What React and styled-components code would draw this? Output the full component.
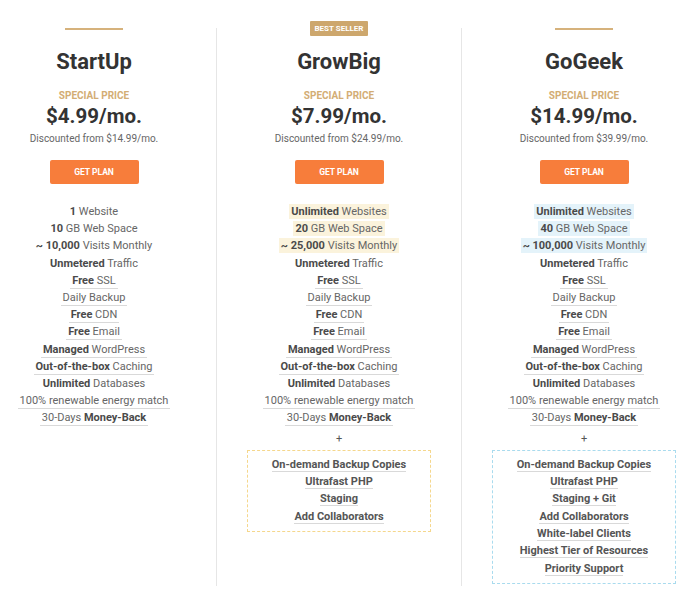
import React from 'react';
import styled, { createGlobalStyle } from 'styled-components';

const GlobalStyle = createGlobalStyle`
  html, body {
    margin: 0;
    padding: 0;
    background: #fff;
    overflow: hidden;
  }
  body {
    font-family: Roboto, 'Liberation Sans', Arial, sans-serif;
    color: #666;
  }
`;

const Grid = styled.div`
  display: grid;
  grid-template-columns: 245px 245px 245px;
  margin: 28px 0 0 -29px;
  width: 735px;
`;

const Column = styled.div`
  display: flex;
  flex-direction: column;
  align-items: center;
  border-left: ${(p) => (p.$divider ? '1px solid #e6e6e6' : '1px solid transparent')};
  padding-bottom: 2px;
`;

const Cap = styled.div`
  width: 58px;
  height: 2px;
  background: #d6b27c;
`;

const Badge = styled.div`
  margin: -7px 0 -6px;
  height: 15px;
  padding: 0 5px;
  background: #cda76d;
  color: #fff;
  font-size: 8px;
  font-weight: 700;
  line-height: 15px;
  border-radius: 1px;
  text-transform: uppercase;
`;

const Title = styled.h2`
  margin: 18px 0 0;
  font-size: 22px;
  line-height: 28px;
  font-weight: 700;
  color: #333;
`;

const Special = styled.div`
  margin-top: 14px;
  font-size: 10px;
  line-height: 12px;
  font-weight: 700;
  color: #d3ad74;
  text-transform: uppercase;
`;

const Price = styled.div`
  margin-top: 2px;
  font-size: 20.5px;
  line-height: 24px;
  font-weight: 700;
  color: #333;
`;

const Discount = styled.div`
  margin-top: 5px;
  font-size: 10px;
  line-height: 12px;
  color: #666;
`;

const Button = styled.button`
  margin-top: 15px;
  width: 89px;
  height: 24px;
  border: none;
  border-radius: 2px;
  background: #f77d3b;
  color: #fff;
  font-family: inherit;
  font-size: 8.5px;
  font-weight: 700;
  text-transform: uppercase;
  cursor: pointer;
`;

const Features = styled.ul`
  list-style: none;
  margin: 19px 0 0;
  padding: 0;
  text-align: center;
`;

const Row = styled.li`
  font-size: 11px;
  line-height: 17.2px;
  color: #666;
  white-space: nowrap;
  & b {
    font-weight: 700;
    color: #4a4a4a;
  }
`;

const Mark = styled.span`
  padding: 1px 2px;
  background: ${(p) => p.$bg || 'transparent'};
  border-bottom: ${(p) => (p.$line ? '1px solid #d9d9d9' : 'none')};
`;

const Plus = styled.div`
  margin-top: 3px;
  font-size: 11px;
  line-height: 17px;
  color: #555;
`;

const Extras = styled.ul`
  list-style: none;
  margin: 3px 0 0;
  padding: 5px 0 6px;
  width: 184px;
  box-sizing: border-box;
  border: 1px dashed ${(p) => p.$color};
  text-align: center;
`;

const Extra = styled.li`
  font-size: 11px;
  line-height: 17.35px;
  font-weight: 700;
  color: #555;
  & span {
    border-bottom: 1px solid #d9d9d9;
  }
`;

const plans = [
  {
    name: 'StartUp',
    price: '$4.99/mo.',
    was: '$14.99/mo.',
    hi: null,
    top: ['1', ' Website', '10', ' GB Web Space', '~ 10,000', ' Visits Monthly'],
  },
  {
    name: 'GrowBig',
    badge: 'Best Seller',
    price: '$7.99/mo.',
    was: '$24.99/mo.',
    hi: '#fbf3dc',
    box: '#f5d78c',
    top: ['Unlimited', ' Websites', '20', ' GB Web Space', '~ 25,000', ' Visits Monthly'],
    extras: ['On-demand Backup Copies', 'Ultrafast PHP', 'Staging', 'Add Collaborators'],
  },
  {
    name: 'GoGeek',
    price: '$14.99/mo.',
    was: '$39.99/mo.',
    hi: '#e4f3fa',
    box: '#a9dbee',
    top: ['Unlimited', ' Websites', '40', ' GB Web Space', '~ 100,000', ' Visits Monthly'],
    extras: [
      'On-demand Backup Copies',
      'Ultrafast PHP',
      'Staging + Git',
      'Add Collaborators',
      'White-label Clients',
      'Highest Tier of Resources',
      'Priority Support',
    ],
  },
];

// [bold part, plain part, underlined, bold comes last]
const common = [
  ['Unmetered', ' Traffic', false],
  ['Free', ' SSL', true],
  ['', 'Daily Backup', true],
  ['Free', ' CDN', true],
  ['Free', ' Email', true],
  ['Managed', ' WordPress', true],
  ['Out-of-the-box', ' Caching', true],
  ['Unlimited', ' Databases', false],
  ['', '100% renewable energy match', true],
  ['Money-Back', '30-Days ', true, true],
];

const Plan = ({ plan, index }) => {
  const t = plan.top;
  return (
    <Column $divider={index > 0}>
      {plan.badge ? <Badge>{plan.badge}</Badge> : <Cap />}
      <Title>{plan.name}</Title>
      <Special>Special price</Special>
      <Price>{plan.price}</Price>
      <Discount>Discounted from {plan.was}</Discount>
      <Button>Get plan</Button>
      <Features>
        {[0, 2, 4].map((i) => (
          <Row key={i}>
            <Mark $bg={plan.hi}>
              <b>{t[i]}</b>
              {t[i + 1]}
            </Mark>
          </Row>
        ))}
        {common.map(([bold, plain, line, after]) => (
          <Row key={bold + plain}>
            <Mark $line={line}>
              {after ? plain : null}
              {bold && <b>{bold}</b>}
              {after ? null : plain}
            </Mark>
          </Row>
        ))}
      </Features>
      {plan.extras && (
        <>
          <Plus>+</Plus>
          <Extras $color={plan.box}>
            {plan.extras.map((e) => (
              <Extra key={e}>
                <span>{e}</span>
              </Extra>
            ))}
          </Extras>
        </>
      )}
    </Column>
  );
};

const App = () => {
  return (
    <>
      <GlobalStyle />
      <Grid>
        {plans.map((p, i) => (
          <Plan key={p.name} plan={p} index={i} />
        ))}
      </Grid>
    </>
  );
};

export default App;
